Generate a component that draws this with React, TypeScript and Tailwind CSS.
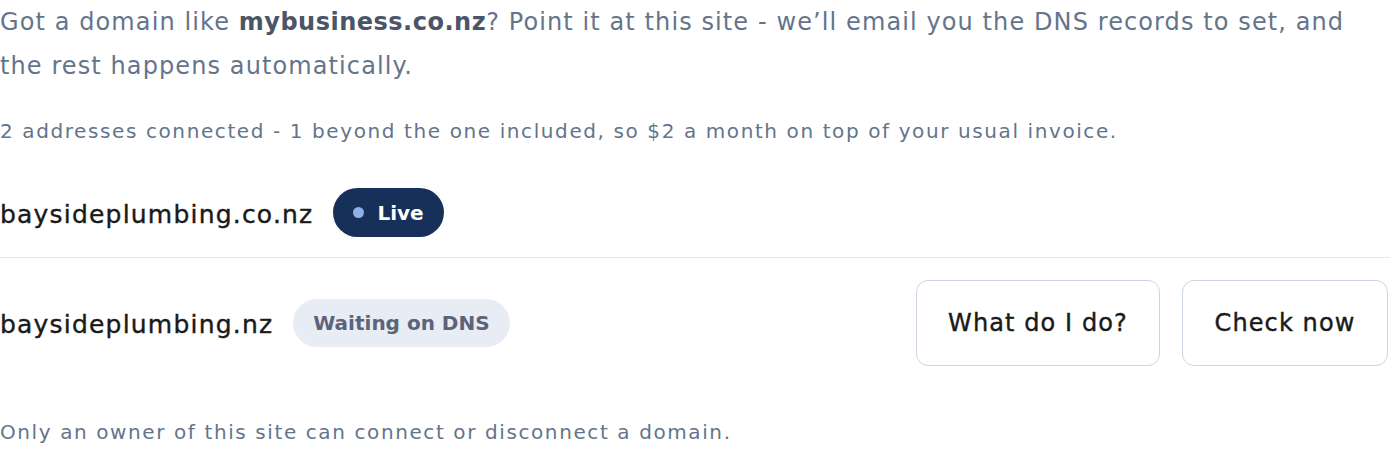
const font = { fontFamily: "'DejaVu Sans', sans-serif" };

const App = () => {
  return (
    <div className="w-[1390px] bg-white text-[#64748b]" style={font}>
      <p className="max-w-[1370px] text-[24px] leading-[44px] tracking-[1.1px]">
        Got a domain like <strong className="font-bold tracking-[0.5px] text-[#4b5567]">mybusiness.co.nz</strong>? Point it at this site - we’ll email you the DNS records to set, and the rest happens automatically.
      </p>
      <p className="mt-[28px] text-[20px] leading-[30px] tracking-[1.6px]">
        2 addresses connected - 1 beyond the one included, so $2 a month on top of your usual invoice.
      </p>

      <div className="mt-[22px]">
        {/* first address, live */}
        <div className="flex items-center gap-5 py-5 border-b border-[#e2e8f0]">
          <span className="pt-[4px] text-[25px] tracking-[1.2px] text-[#1a1a1a] [-webkit-text-stroke:0.4px_#1a1a1a]">baysideplumbing.co.nz</span>
          <span className="flex items-center gap-[13px] h-[49px] px-5 rounded-full bg-[#16305a] text-white text-[20px] font-bold">
            <span className="w-[11px] h-[11px] rounded-full bg-[#8fb0e8]" />
            Live
          </span>
        </div>

        {/* second address, waiting */}
        <div className="flex items-center gap-5 pt-[22px] pb-5">
          <span className="pt-[4px] text-[25px] tracking-[1.2px] text-[#1a1a1a] [-webkit-text-stroke:0.4px_#1a1a1a]">baysideplumbing.nz</span>
          <span className="flex items-center h-[48px] px-5 rounded-full bg-[#e8ecf4] text-[#5b6478] text-[20px] font-bold">
            Waiting on DNS
          </span>
          <div className="ml-auto flex gap-[22px] pr-[2px]">
            <button className="w-[244px] h-[86px] rounded-[12px] border border-[#cbd5e1] text-[24px] tracking-[1.1px] text-[#1a1a1a] [-webkit-text-stroke:0.4px_#1a1a1a]">
              What do I do?
            </button>
            <button className="w-[206px] h-[86px] rounded-[12px] border border-[#cbd5e1] text-[24px] tracking-[1.1px] text-[#1a1a1a] [-webkit-text-stroke:0.4px_#1a1a1a]">
              Check now
            </button>
          </div>
        </div>
      </div>

      <p className="mt-[31px] text-[20px] leading-[30px] tracking-[1.6px]">
        Only an owner of this site can connect or disconnect a domain.
      </p>
    </div>
  );
};

export default App;
